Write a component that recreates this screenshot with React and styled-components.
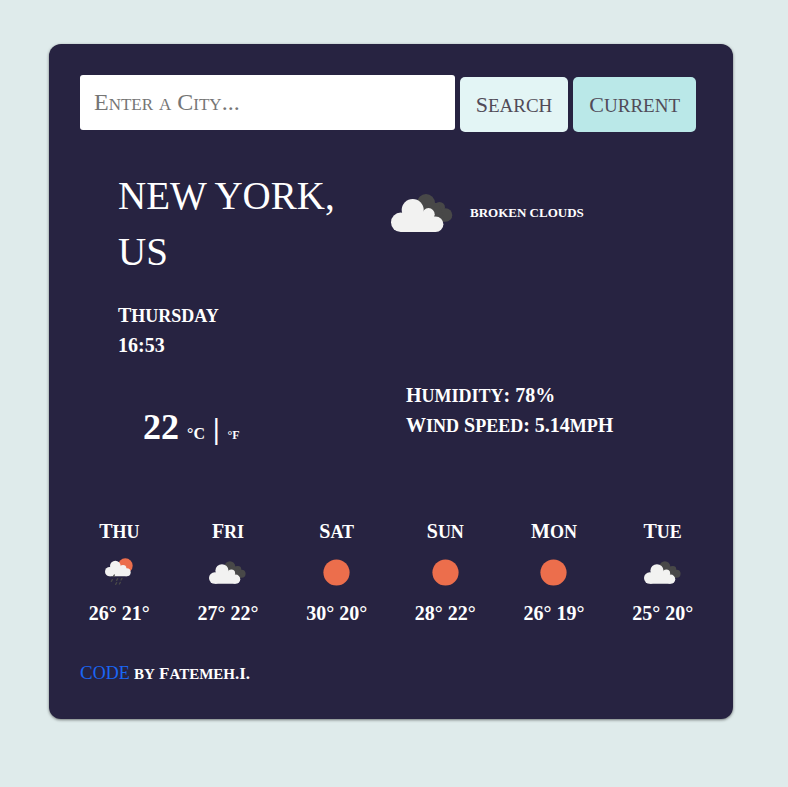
import React from "react";
import styled, { createGlobalStyle } from "styled-components";

const GlobalStyle = createGlobalStyle`
  * { box-sizing: border-box; }
  body {
    margin: 0;
    background: #dfebeb;
    color: #fff;
    font-family: "Liberation Serif", serif;
    font-size: 20px;
    line-height: 30px;
  }
`;

const Card = styled.main`
  margin: 44px 55px 44px 49px;
  padding: 31px 16px 30px;
  background: #272341;
  border-radius: 12px;
  box-shadow: 0 1px 3px rgba(0, 0, 0, 0.5);
`;

const SearchForm = styled.form`
  display: flex;
  align-items: flex-end;
  gap: 5px;
  padding: 0 21px 0 15px;
`;

const CityInput = styled.input`
  flex: 1;
  min-width: 0;
  height: 55px;
  margin-bottom: 2px;
  padding: 0 14px;
  border: 0;
  border-radius: 3px;
  background: #fff;
  color: #272341;
  font: inherit;
  font-size: 24px;
  font-variant: small-caps;
  &::placeholder {
    color: #757575;
    opacity: 1;
  }
`;

const FormButton = styled.button`
  height: 55px;
  padding: 0 16px;
  border: 0;
  border-radius: 5px;
  background: ${(p) => p.$background};
  color: #514b58;
  font: inherit;
  font-size: 22px;
  cursor: pointer;
`;

const Lower = styled.span`
  font-size: ${(p) => p.$size}px;
  line-height: 1;
  text-transform: uppercase;
`;

const Overview = styled.section`
  display: grid;
  grid-template-columns: 1fr 1fr;
  padding-top: 36px;
`;

const Place = styled.div`
  padding: 0 0 0 53px;
`;

const City = styled.h1`
  margin: 0 0 20px;
  font-size: 39px;
  font-weight: 400;
  line-height: 56px;
  text-transform: uppercase;
  max-width: 240px;
`;

const Moment = styled.div`
  font-weight: 700;
`;

const Condition = styled.div`
  display: flex;
  align-items: center;
  align-self: start;
  gap: 17px;
  padding-top: 26px;
`;

const Description = styled.span`
  font-size: 13px;
  line-height: 20px;
  font-weight: 700;
  text-transform: uppercase;
`;

const Readings = styled.section`
  display: grid;
  grid-template-columns: 1fr 1fr;
  padding-top: 20px;
`;

const Temperature = styled.div`
  display: flex;
  align-items: baseline;
  gap: 8px;
  padding: 32px 0 0 78px;
`;

const Degrees = styled.strong`
  font-size: 36px;
`;

const Divider = styled.span`
  font-size: 30px;
  font-weight: 700;
`;

const Unit = styled.a`
  color: #fff;
  font-size: ${(p) => p.$size}px;
  font-weight: 700;
  text-decoration: none;
`;

const Details = styled.div`
  padding-left: 15px;
  font-weight: 700;
`;

const Forecast = styled.section`
  display: grid;
  grid-template-columns: repeat(6, 1fr);
  padding-top: 66px;
  font-weight: 700;
`;

const Day = styled.div`
  display: flex;
  flex-direction: column;
  align-items: center;
`;

const IconBox = styled.div`
  display: flex;
  align-items: center;
  justify-content: center;
  height: 52px;
`;

const Footer = styled.footer`
  padding: 31px 15px 0;
  font-size: 17px;
  font-weight: 700;
`;

const CodeLink = styled.a`
  color: #1a66f5;
  font-size: 19px;
  font-weight: 400;
  line-height: 1;
  text-decoration: none;
`;

function SmallCaps({ text, size = 18 }) {
  return text
    .split(/([a-z]+)/)
    .map((part, i) => (i % 2 ? <Lower key={i} $size={size}>{part}</Lower> : part));
}

function CloudsIcon({ width, height }) {
  return (
    <svg width={width} height={height} viewBox="0 0 62 38" aria-hidden="true">
      <g fill="#484848">
        <circle cx="35" cy="9" r="9" />
        <circle cx="48.5" cy="13.5" r="5.5" />
        <circle cx="54.5" cy="21" r="6.8" />
        <path d="M35 9H48L54 27.8H42L30 18Z" />
      </g>
      <g fill="#f2f2f1">
        <circle cx="9.7" cy="28.3" r="9.7" />
        <circle cx="21.7" cy="16" r="11" />
        <circle cx="37.5" cy="20.3" r="6.2" />
        <circle cx="44.6" cy="30.2" r="7.8" />
        <path d="M9.7 38V22L12 18H38L44.6 24V38Z" />
      </g>
    </svg>
  );
}

function SunIcon() {
  return (
    <svg width="27" height="27" viewBox="0 0 27 27" aria-hidden="true">
      <circle cx="13.5" cy="13.5" r="13.1" fill="#ec6e4c" />
    </svg>
  );
}

function RainIcon() {
  return (
    <svg width="28" height="28" viewBox="0 0 84 84" aria-hidden="true">
      <circle cx="61" cy="23" r="22" fill="#ec6e4c" />
      <g fill="#f2f2f1">
        <circle cx="14" cy="41" r="14" />
        <circle cx="31" cy="24" r="16" />
        <circle cx="54" cy="31" r="10" />
        <circle cx="65" cy="43" r="12" />
        <path d="M14 55V32L18 26H55L65 33V55Z" />
      </g>
      <path
        d="M28 51L25 56M22 65L19 70M38 62L35 67M35 74L32 79M51 61L48 66M46 73L43 78"
        stroke="#484848"
        strokeWidth="4"
        strokeLinecap="round"
      />
    </svg>
  );
}

const days = [
  { name: "Thu", icon: <RainIcon />, high: 26, low: 21 },
  { name: "Fri", icon: <CloudsIcon width={37} height={23} />, high: 27, low: 22 },
  { name: "Sat", icon: <SunIcon />, high: 30, low: 20 },
  { name: "Sun", icon: <SunIcon />, high: 28, low: 22 },
  { name: "Mon", icon: <SunIcon />, high: 26, low: 19 },
  { name: "Tue", icon: <CloudsIcon width={37} height={23} />, high: 25, low: 20 },
];

export default function App() {
  return (
    <>
      <GlobalStyle />
      <Card>
        <SearchForm onSubmit={(e) => e.preventDefault()}>
          <CityInput type="text" placeholder="Enter a City..." aria-label="Enter a City" />
          <FormButton type="submit" $background="#e3f5f5">
            <SmallCaps text="Search" size={19} />
          </FormButton>
          <FormButton type="button" $background="#bae8e8">
            <SmallCaps text="Current" size={19} />
          </FormButton>
        </SearchForm>

        <Overview>
          <Place>
            <City>New York, US</City>
            <Moment>
              <div><SmallCaps text="Thursday" /></div>
              <div>16:53</div>
            </Moment>
          </Place>
          <Condition>
            <CloudsIcon width={62} height={38} />
            <Description>broken clouds</Description>
          </Condition>
        </Overview>

        <Readings>
          <Temperature>
            <Degrees>22</Degrees>
            <Unit href="#celsius" $size={16}>°C</Unit>
            <Divider>|</Divider>
            <Unit href="#fahrenheit" $size={12}>°F</Unit>
          </Temperature>
          <Details>
            <div><SmallCaps text="Humidity: 78%" /></div>
            <div><SmallCaps text="Wind Speed: 5.14mpH" /></div>
          </Details>
        </Readings>

        <Forecast>
          {days.map((day) => (
            <Day key={day.name}>
              <div><SmallCaps text={day.name} /></div>
              <IconBox>{day.icon}</IconBox>
              <div>{`${day.high}° ${day.low}°`}</div>
            </Day>
          ))}
        </Forecast>

        <Footer>
          <CodeLink href="#code"><SmallCaps text="Code" /></CodeLink>{" "}
          <SmallCaps text="by Fatemeh.I." size={15} />
        </Footer>
      </Card>
    </>
  );
}
